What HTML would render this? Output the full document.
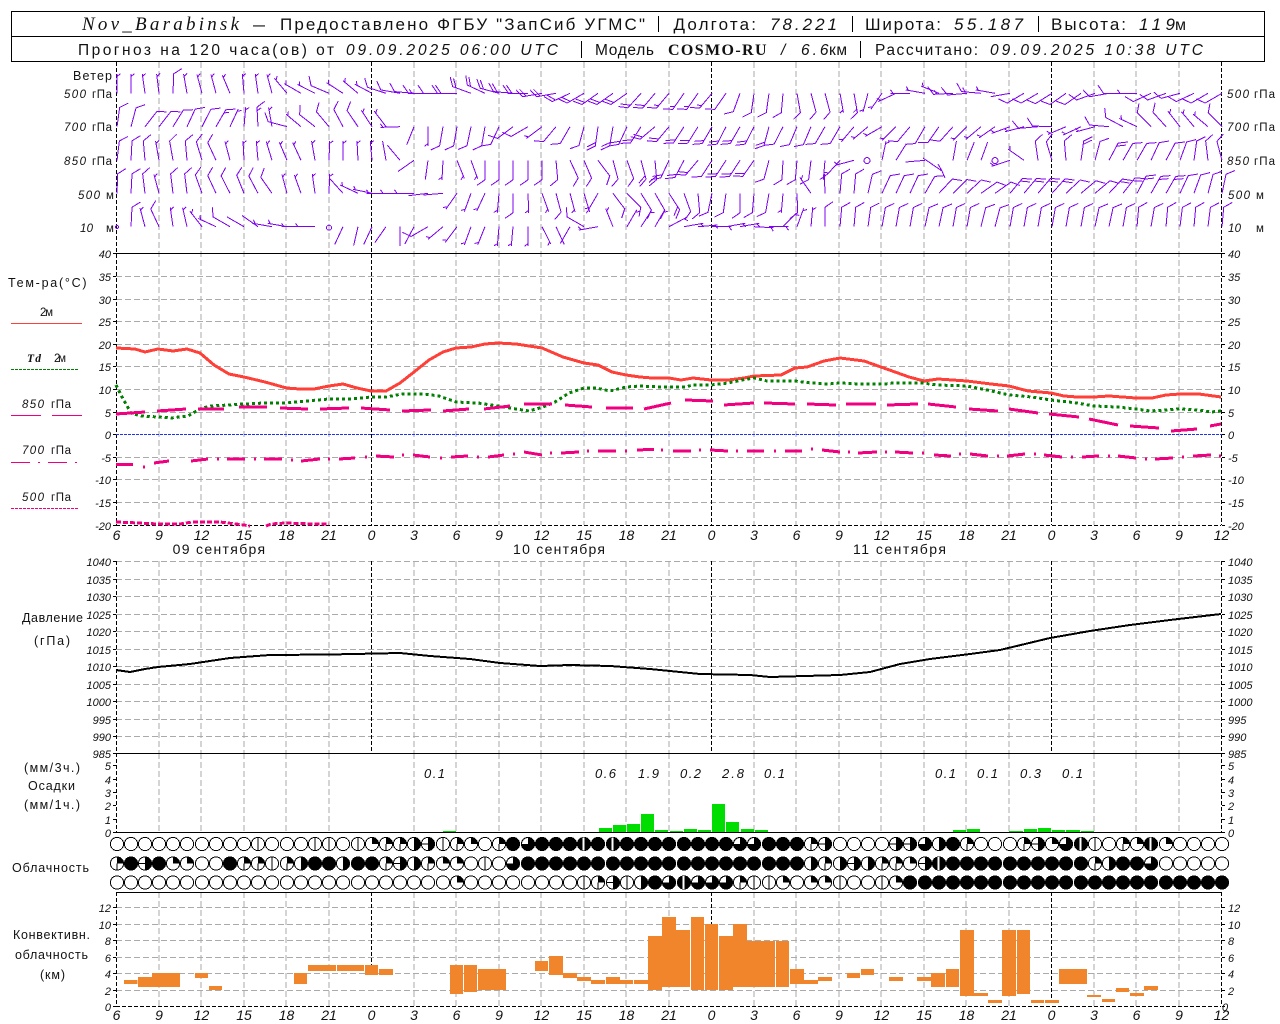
<!DOCTYPE html>
<html><head><meta charset="utf-8"><title>Nov_Barabinsk</title>
<style>
html,body{margin:0;padding:0;background:#fff;width:1280px;height:1024px;overflow:hidden}
svg{display:block}
text{font-family:"Liberation Sans",sans-serif;fill:#111}
.i{font-style:italic}
.t{font-size:17px}
.u{font-size:15.5px}
.a{font-size:11px;font-style:italic}
.h{font-size:14px;font-style:italic;text-anchor:middle}
.l{font-size:12.5px}
.p{font-size:13px;font-style:italic}
.s{font-family:"Liberation Serif",serif}
.g{fill:none;stroke:#aaa;stroke-width:1;stroke-dasharray:6 3}
.k{fill:none;stroke:#000;stroke-width:1;stroke-dasharray:4 2}
.w use,.w path,.w circle{fill:none;stroke:#8000f0;stroke-width:1}
</style></head><body>
<svg width="1280" height="1024" viewBox="0 0 1280 1024" xmlns="http://www.w3.org/2000/svg">
<defs>
<path id="s" d="M0 0V-19.5M0-17L3.5-19.5"/>
<path id="l" d="M0 0V-19.5L8-25"/>
<path id="m" d="M0 0V-19.5L8-25M0-16L4-18.7"/>
<path id="d" d="M0 0V-19.5L8-25M0-16L8-21.5"/>
<path id="n" d="M0 0V-19.5"/>
<g id="c0"><circle r="6.6" fill="#fff" stroke="#000"/></g>
<g id="c1"><circle r="6.6" fill="#fff" stroke="#000"/><path d="M0-6.6V6.6" stroke="#000"/></g>
<g id="c2"><circle r="6.6" fill="#fff" stroke="#000"/><path d="M0 0V-6.6A6.6 6.6 0 0 1 6.6 0Z" fill="#000"/></g>
<g id="c3"><circle r="6.6" fill="#fff" stroke="#000"/><path d="M0 0V-6.6A6.6 6.6 0 0 1 6.6 0Z" fill="#000"/><path d="M0 0V6.6" stroke="#000"/></g>
<g id="c4"><circle r="6.6" fill="#fff" stroke="#000"/><path d="M0-6.6A6.6 6.6 0 0 1 0 6.6Z" fill="#000"/></g>
<g id="c5"><circle r="6.6" fill="#fff" stroke="#000"/><path d="M0-6.6A6.6 6.6 0 0 1 0 6.6Z" fill="#000"/><path d="M-6.6 0H0" stroke="#000"/></g>
<g id="c6"><circle r="6.6" fill="#000" stroke="#000"/><path d="M0 0V-6A6 6 0 0 0-6 0Z" fill="#fff"/></g>
<g id="c7"><circle r="6.6" fill="#000" stroke="#000"/><rect x="-1.5" y="-6.5" width="2" height="13" fill="#fff"/></g>
<g id="c8"><circle r="6.6" fill="#000" stroke="#000"/></g>
</defs>

<g shape-rendering="crispEdges">
<rect x="11.5" y="11.5" width="1253" height="50" fill="none" stroke="#000"/>
<path d="M11 36.5H1265" stroke="#000"/>
<path d="M658.5 16V32M852.5 16V32M1038.5 16V32M581.5 41V58M860.5 41V58" stroke="#000"/>

<path class="g" d="M159 62V525M201 62V525M244 62V525M286 62V525M329 62V525M414 62V525M456 62V525M499 62V525M541 62V525M584 62V525M626 62V525M669 62V525M754 62V525M796 62V525M839 62V525M881 62V525M924 62V525M966 62V525M1009 62V525M1094 62V525M1136 62V525M1179 62V525"/>
<path class="g" d="M159 561V753M201 561V753M244 561V753M286 561V753M329 561V753M414 561V753M456 561V753M499 561V753M541 561V753M584 561V753M626 561V753M669 561V753M754 561V753M796 561V753M839 561V753M881 561V753M924 561V753M966 561V753M1009 561V753M1094 561V753M1136 561V753M1179 561V753"/>
<path class="g" d="M159 753V832M201 753V832M244 753V832M286 753V832M329 753V832M414 753V832M456 753V832M499 753V832M541 753V832M584 753V832M626 753V832M669 753V832M754 753V832M796 753V832M839 753V832M881 753V832M924 753V832M966 753V832M1009 753V832M1094 753V832M1136 753V832M1179 753V832"/>
<path class="g" d="M159 892V1006M201 892V1006M244 892V1006M286 892V1006M329 892V1006M414 892V1006M456 892V1006M499 892V1006M541 892V1006M584 892V1006M626 892V1006M669 892V1006M754 892V1006M796 892V1006M839 892V1006M881 892V1006M924 892V1006M966 892V1006M1009 892V1006M1094 892V1006M1136 892V1006M1179 892V1006"/>
<path class="g" d="M116 276.5H1221M116 299.5H1221M116 321.5H1221M116 344.5H1221M116 366.5H1221M116 389.5H1221M116 412.5H1221M116 457.5H1221M116 479.5H1221M116 502.5H1221"/>
<path class="g" d="M116 561.5H1221M116 579.5H1221M116 596.5H1221M116 614.5H1221M116 631.5H1221M116 649.5H1221M116 666.5H1221M116 684.5H1221M116 701.5H1221M116 719.5H1221M116 736.5H1221"/>
<path class="g" d="M116 907.5H1221M116 924.5H1221M116 940.5H1221M116 957.5H1221M116 973.5H1221M116 990.5H1221"/>
<path class="k" d="M371.5 62V525M711.5 62V525M1051.5 62V525M371.5 561V753M711.5 561V753M1051.5 561V753M371.5 892V965M711.5 892V925M1051.5 892V998"/>
<path class="k" d="M116.5 62V525M116.5 561V832M116.5 892V1006M1221.5 62V525M1221.5 561V832M1221.5 892V1006M116 525.5H1221M116 1006.5H1221"/>
<path d="M116 253.5H1222M116 753.5H1222M116 832.5H1222M116 892.5H1222" stroke="#000" fill="none"/>
<path d="M113 253.5h3M113 276.5h3M113 299.5h3M113 321.5h3M113 344.5h3M113 366.5h3M113 389.5h3M113 412.5h3M113 434.5h3M113 457.5h3M113 479.5h3M113 502.5h3M113 525.5h3M113 561.5h3M113 579.5h3M113 596.5h3M113 614.5h3M113 631.5h3M113 649.5h3M113 666.5h3M113 684.5h3M113 701.5h3M113 719.5h3M113 736.5h3M113 753.5h3M113 765.5h3M113 779.5h3M113 792.5h3M113 805.5h3M113 819.5h3M113 832.5h3M113 907.5h3M113 924.5h3M113 940.5h3M113 957.5h3M113 973.5h3M113 990.5h3M113 1006.5h3M1222 253.5h3M1222 276.5h3M1222 299.5h3M1222 321.5h3M1222 344.5h3M1222 366.5h3M1222 389.5h3M1222 412.5h3M1222 434.5h3M1222 457.5h3M1222 479.5h3M1222 502.5h3M1222 525.5h3M1222 561.5h3M1222 579.5h3M1222 596.5h3M1222 614.5h3M1222 631.5h3M1222 649.5h3M1222 666.5h3M1222 684.5h3M1222 701.5h3M1222 719.5h3M1222 736.5h3M1222 753.5h3M1222 765.5h3M1222 779.5h3M1222 792.5h3M1222 805.5h3M1222 819.5h3M1222 832.5h3M1222 907.5h3M1222 924.5h3M1222 940.5h3M1222 957.5h3M1222 973.5h3M1222 990.5h3M1222 1006.5h3" stroke="#000" fill="none"/>
<path d="M116 434.5H1222" stroke="#2030ff" stroke-dasharray="3 1" fill="none"/>

<g class="w">
<g transform="translate(0 93.3)">
<use href="#s" transform="translate(117)rotate(0)"/><use href="#s" transform="translate(131)rotate(0)"/><use href="#s" transform="translate(145)rotate(-8)"/><use href="#s" transform="translate(159)rotate(-7)"/><use href="#l" transform="translate(173)rotate(2)"/><use href="#s" transform="translate(187)rotate(-10)"/><use href="#s" transform="translate(202)rotate(-15)"/><use href="#s" transform="translate(216)rotate(-15)"/><use href="#s" transform="translate(230)rotate(-23)"/><use href="#s" transform="translate(244)rotate(-5)"/><use href="#s" transform="translate(258)rotate(-8)"/><use href="#s" transform="translate(272)rotate(-15)"/><use href="#s" transform="translate(287)rotate(-40)"/><use href="#s" transform="translate(301)rotate(-60)"/><use href="#s" transform="translate(315)rotate(-63)"/><use href="#l" transform="translate(329)rotate(-67)"/><use href="#s" transform="translate(343)rotate(-57)"/><use href="#s" transform="translate(358)rotate(-50)"/><use href="#s" transform="translate(372)rotate(-62)"/><use href="#l" transform="translate(386)rotate(-72)"/><use href="#l" transform="translate(400)rotate(-80)"/><use href="#l" transform="translate(414)rotate(-85)"/><use href="#m" transform="translate(428)rotate(-90)"/><use href="#l" transform="translate(443)rotate(-90)"/><use href="#d" transform="translate(457)rotate(-90)"/><use href="#d" transform="translate(471)rotate(-70)"/><use href="#d" transform="translate(485)rotate(-65)"/><use href="#d" transform="translate(499)rotate(-75)"/><use href="#d" transform="translate(513)rotate(-85)"/><use href="#d" transform="translate(528)rotate(-90)"/><use href="#d" transform="translate(542)rotate(-100)"/><use href="#d" transform="translate(556)rotate(-100)"/><use href="#d" transform="translate(570)rotate(-115)"/><use href="#d" transform="translate(584)rotate(-120)"/><use href="#d" transform="translate(598)rotate(-125)"/><use href="#d" transform="translate(613)rotate(-125)"/><use href="#d" transform="translate(627)rotate(-125)"/><use href="#d" transform="translate(641)rotate(-138)"/><use href="#d" transform="translate(655)rotate(-140)"/><use href="#m" transform="translate(669)rotate(-140)"/><use href="#m" transform="translate(684)rotate(-145)"/><use href="#m" transform="translate(698)rotate(-145)"/><use href="#m" transform="translate(712)rotate(-140)"/><use href="#l" transform="translate(726)rotate(-145)"/><use href="#l" transform="translate(740)rotate(-160)"/><use href="#l" transform="translate(754)rotate(-172)"/><use href="#l" transform="translate(769)rotate(-172)"/><use href="#l" transform="translate(783)rotate(-175)"/><use href="#l" transform="translate(797)rotate(170)"/><use href="#l" transform="translate(811)rotate(165)"/><use href="#l" transform="translate(825)rotate(165)"/><use href="#s" transform="translate(840)rotate(170)"/><use href="#m" transform="translate(854)rotate(170)"/><use href="#s" transform="translate(868)rotate(-165)"/><use href="#s" transform="translate(882)rotate(-145)"/><use href="#s" transform="translate(896)rotate(-115)"/><use href="#s" transform="translate(910)rotate(-90)"/><use href="#s" transform="translate(925)rotate(-80)"/><use href="#s" transform="translate(939)rotate(-68)"/><use href="#m" transform="translate(953)rotate(-93)"/><use href="#l" transform="translate(967)rotate(-95)"/><use href="#m" transform="translate(981)rotate(-85)"/><use href="#s" transform="translate(995)rotate(-80)"/><use href="#n" transform="translate(1010)rotate(-100)"/><use href="#l" transform="translate(1024)rotate(-120)"/><use href="#l" transform="translate(1038)rotate(-120)"/><use href="#l" transform="translate(1052)rotate(-122)"/><use href="#l" transform="translate(1066)rotate(-125)"/><use href="#l" transform="translate(1081)rotate(-125)"/><use href="#l" transform="translate(1095)rotate(-110)"/><use href="#l" transform="translate(1109)rotate(-100)"/><use href="#l" transform="translate(1123)rotate(-90)"/><use href="#s" transform="translate(1137)rotate(-90)"/><use href="#l" transform="translate(1151)rotate(-115)"/><use href="#l" transform="translate(1166)rotate(-110)"/><use href="#l" transform="translate(1180)rotate(-105)"/><use href="#l" transform="translate(1194)rotate(-115)"/><use href="#l" transform="translate(1208)rotate(-120)"/><use href="#l" transform="translate(1222)rotate(-120)"/>
</g>
<g transform="translate(0 126.7)">
<use href="#l" transform="translate(117)rotate(8)"/><use href="#l" transform="translate(131)rotate(15)"/><use href="#l" transform="translate(145)rotate(38)"/><use href="#l" transform="translate(159)rotate(38)"/><use href="#l" transform="translate(173)rotate(32)"/><use href="#l" transform="translate(187)rotate(25)"/><use href="#l" transform="translate(202)rotate(27)"/><use href="#m" transform="translate(216)rotate(30)"/><use href="#s" transform="translate(230)rotate(25)"/><use href="#s" transform="translate(244)rotate(5)"/><use href="#m" transform="translate(258)rotate(-3)"/><use href="#s" transform="translate(272)rotate(-10)"/><use href="#l" transform="translate(287)rotate(-75)"/><use href="#s" transform="translate(301)rotate(-50)"/><use href="#l" transform="translate(315)rotate(-52)"/><use href="#l" transform="translate(329)rotate(-40)"/><use href="#l" transform="translate(343)rotate(-28)"/><use href="#l" transform="translate(358)rotate(-34)"/><use href="#s" transform="translate(372)rotate(-33)"/><use href="#s" transform="translate(386)rotate(-37)"/><use href="#s" transform="translate(400)rotate(-92)"/><use href="#n" transform="translate(414)rotate(-158)"/><use href="#s" transform="translate(428)rotate(180)"/><use href="#l" transform="translate(443)rotate(-170)"/><use href="#l" transform="translate(457)rotate(-170)"/><use href="#l" transform="translate(471)rotate(-168)"/><use href="#l" transform="translate(485)rotate(-170)"/><use href="#l" transform="translate(499)rotate(-155)"/><use href="#l" transform="translate(513)rotate(-127)"/><use href="#l" transform="translate(528)rotate(-120)"/><use href="#s" transform="translate(542)rotate(-127)"/><use href="#l" transform="translate(556)rotate(-140)"/><use href="#l" transform="translate(570)rotate(-150)"/><use href="#l" transform="translate(584)rotate(-165)"/><use href="#d" transform="translate(598)rotate(-172)"/><use href="#d" transform="translate(613)rotate(-170)"/><use href="#d" transform="translate(627)rotate(-155)"/><use href="#d" transform="translate(641)rotate(-147)"/><use href="#d" transform="translate(655)rotate(-130)"/><use href="#d" transform="translate(669)rotate(-140)"/><use href="#d" transform="translate(684)rotate(-147)"/><use href="#d" transform="translate(698)rotate(-148)"/><use href="#d" transform="translate(712)rotate(-150)"/><use href="#d" transform="translate(726)rotate(-153)"/><use href="#d" transform="translate(740)rotate(-150)"/><use href="#d" transform="translate(754)rotate(-153)"/><use href="#d" transform="translate(769)rotate(-165)"/><use href="#l" transform="translate(783)rotate(-153)"/><use href="#l" transform="translate(797)rotate(-157)"/><use href="#l" transform="translate(811)rotate(-157)"/><use href="#l" transform="translate(825)rotate(-150)"/><use href="#l" transform="translate(840)rotate(-150)"/><use href="#s" transform="translate(854)rotate(-140)"/><use href="#s" transform="translate(868)rotate(-130)"/><use href="#s" transform="translate(882)rotate(-120)"/><use href="#s" transform="translate(896)rotate(-135)"/><use href="#l" transform="translate(910)rotate(-140)"/><use href="#l" transform="translate(925)rotate(-150)"/><use href="#l" transform="translate(939)rotate(-145)"/><use href="#l" transform="translate(953)rotate(-138)"/><use href="#s" transform="translate(967)rotate(-135)"/><use href="#s" transform="translate(981)rotate(-130)"/><use href="#s" transform="translate(995)rotate(-125)"/><use href="#s" transform="translate(1010)rotate(-110)"/><use href="#s" transform="translate(1024)rotate(-105)"/><use href="#l" transform="translate(1038)rotate(-95)"/><use href="#l" transform="translate(1052)rotate(-88)"/><use href="#s" transform="translate(1066)rotate(-113)"/><use href="#s" transform="translate(1081)rotate(-115)"/><use href="#s" transform="translate(1095)rotate(-105)"/><use href="#l" transform="translate(1109)rotate(-85)"/><use href="#l" transform="translate(1123)rotate(-62)"/><use href="#s" transform="translate(1137)rotate(-65)"/><use href="#l" transform="translate(1151)rotate(-45)"/><use href="#l" transform="translate(1166)rotate(-42)"/><use href="#s" transform="translate(1180)rotate(-38)"/><use href="#s" transform="translate(1194)rotate(-40)"/><use href="#s" transform="translate(1208)rotate(-50)"/><use href="#l" transform="translate(1222)rotate(-45)"/>
</g>
<g transform="translate(0 160.3)">
<use href="#l" transform="translate(117)rotate(7)"/><use href="#l" transform="translate(131)rotate(3)"/><use href="#l" transform="translate(145)rotate(-5)"/><use href="#s" transform="translate(159)rotate(-10)"/><use href="#l" transform="translate(173)rotate(-10)"/><use href="#l" transform="translate(187)rotate(-5)"/><use href="#l" transform="translate(202)rotate(-17)"/><use href="#l" transform="translate(216)rotate(-25)"/><use href="#s" transform="translate(230)rotate(-15)"/><use href="#s" transform="translate(244)rotate(-3)"/><use href="#s" transform="translate(258)rotate(-5)"/><use href="#s" transform="translate(272)rotate(-17)"/><use href="#s" transform="translate(287)rotate(-23)"/><use href="#s" transform="translate(301)rotate(-25)"/><use href="#s" transform="translate(315)rotate(-10)"/><use href="#s" transform="translate(329)rotate(2)"/><use href="#s" transform="translate(343)rotate(0)"/><use href="#s" transform="translate(358)rotate(-3)"/><use href="#s" transform="translate(372)rotate(-5)"/><use href="#n" transform="translate(386)rotate(-10)"/><use href="#n" transform="translate(400)rotate(-40)"/><use href="#n" transform="translate(414)rotate(-125)"/><use href="#n" transform="translate(428)rotate(-172)"/><use href="#s" transform="translate(443)rotate(-177)"/><use href="#s" transform="translate(457)rotate(158)"/><use href="#s" transform="translate(471)rotate(160)"/><use href="#l" transform="translate(485)rotate(180)"/><use href="#l" transform="translate(499)rotate(180)"/><use href="#l" transform="translate(513)rotate(180)"/><use href="#l" transform="translate(528)rotate(180)"/><use href="#l" transform="translate(542)rotate(180)"/><use href="#l" transform="translate(556)rotate(175)"/><use href="#l" transform="translate(570)rotate(155)"/><use href="#l" transform="translate(584)rotate(157)"/><use href="#l" transform="translate(598)rotate(143)"/><use href="#l" transform="translate(613)rotate(165)"/><use href="#l" transform="translate(627)rotate(160)"/><use href="#d" transform="translate(641)rotate(165)"/><use href="#d" transform="translate(655)rotate(175)"/><use href="#d" transform="translate(669)rotate(-155)"/><use href="#d" transform="translate(684)rotate(-152)"/><use href="#d" transform="translate(698)rotate(-140)"/><use href="#l" transform="translate(712)rotate(-147)"/><use href="#d" transform="translate(726)rotate(-147)"/><use href="#d" transform="translate(740)rotate(-147)"/><use href="#d" transform="translate(754)rotate(-145)"/><use href="#l" transform="translate(769)rotate(-165)"/><use href="#l" transform="translate(783)rotate(-177)"/><use href="#l" transform="translate(797)rotate(-175)"/><use href="#l" transform="translate(811)rotate(-173)"/><use href="#s" transform="translate(825)rotate(-175)"/><use href="#s" transform="translate(840)rotate(-138)"/><use href="#s" transform="translate(854)rotate(-105)"/><circle cx="867" cy="0.3" r="3"/><use href="#s" transform="translate(882)rotate(12)"/><use href="#n" transform="translate(896)rotate(32)"/><use href="#n" transform="translate(925)rotate(-95)"/><use href="#n" transform="translate(953)rotate(10)"/><use href="#n" transform="translate(967)rotate(22)"/><use href="#n" transform="translate(981)rotate(20)"/><circle cx="995" cy="0.3" r="3"/><use href="#s" transform="translate(1010)rotate(-108)"/><use href="#s" transform="translate(1024)rotate(-55)"/><use href="#l" transform="translate(1038)rotate(-8)"/><use href="#l" transform="translate(1052)rotate(-17)"/><use href="#l" transform="translate(1066)rotate(-5)"/><use href="#d" transform="translate(1081)rotate(8)"/><use href="#l" transform="translate(1095)rotate(15)"/><use href="#d" transform="translate(1109)rotate(28)"/><use href="#l" transform="translate(1123)rotate(30)"/><use href="#l" transform="translate(1137)rotate(30)"/><use href="#l" transform="translate(1151)rotate(25)"/><use href="#l" transform="translate(1166)rotate(28)"/><use href="#l" transform="translate(1180)rotate(20)"/><use href="#l" transform="translate(1194)rotate(8)"/><use href="#l" transform="translate(1208)rotate(-7)"/><use href="#l" transform="translate(1222)rotate(-15)"/>
</g>
<path d="M923 158L942 171L945 178M938 164L942 171"/>
<g transform="translate(0 193.3)">
<use href="#l" transform="translate(117)rotate(2)"/><use href="#l" transform="translate(131)rotate(3)"/><use href="#l" transform="translate(145)rotate(-7)"/><use href="#s" transform="translate(159)rotate(-15)"/><use href="#l" transform="translate(173)rotate(-7)"/><use href="#l" transform="translate(187)rotate(-7)"/><use href="#l" transform="translate(202)rotate(-20)"/><use href="#l" transform="translate(216)rotate(-25)"/><use href="#l" transform="translate(230)rotate(-27)"/><use href="#l" transform="translate(244)rotate(-22)"/><use href="#l" transform="translate(258)rotate(-28)"/><use href="#l" transform="translate(272)rotate(-35)"/><use href="#s" transform="translate(287)rotate(-15)"/><use href="#s" transform="translate(301)rotate(-20)"/><use href="#s" transform="translate(315)rotate(-8)"/><use href="#s" transform="translate(329)rotate(2)"/><use href="#n" transform="translate(343)rotate(-42)"/><use href="#s" transform="translate(358)rotate(-65)"/><use href="#s" transform="translate(372)rotate(-78)"/><use href="#s" transform="translate(386)rotate(-90)"/><use href="#s" transform="translate(400)rotate(-90)"/><use href="#s" transform="translate(414)rotate(-90)"/><use href="#n" transform="translate(428)rotate(-97)"/><use href="#n" transform="translate(443)rotate(-95)"/><use href="#s" transform="translate(457)rotate(-145)"/><use href="#s" transform="translate(471)rotate(-160)"/><use href="#s" transform="translate(485)rotate(-155)"/><use href="#s" transform="translate(499)rotate(-175)"/><use href="#l" transform="translate(513)rotate(180)"/><use href="#s" transform="translate(528)rotate(178)"/><use href="#s" transform="translate(542)rotate(160)"/><use href="#l" transform="translate(556)rotate(165)"/><use href="#s" transform="translate(570)rotate(165)"/><use href="#s" transform="translate(584)rotate(163)"/><use href="#s" transform="translate(598)rotate(-150)"/><use href="#l" transform="translate(613)rotate(143)"/><use href="#l" transform="translate(627)rotate(135)"/><use href="#l" transform="translate(641)rotate(148)"/><use href="#l" transform="translate(655)rotate(150)"/><use href="#d" transform="translate(669)rotate(147)"/><use href="#l" transform="translate(684)rotate(160)"/><use href="#l" transform="translate(698)rotate(175)"/><use href="#l" transform="translate(712)rotate(-168)"/><use href="#l" transform="translate(726)rotate(-172)"/><use href="#l" transform="translate(740)rotate(180)"/><use href="#l" transform="translate(754)rotate(-175)"/><use href="#l" transform="translate(769)rotate(-170)"/><use href="#s" transform="translate(783)rotate(-175)"/><use href="#l" transform="translate(797)rotate(178)"/><use href="#s" transform="translate(811)rotate(-35)"/><use href="#s" transform="translate(825)rotate(-2)"/><use href="#l" transform="translate(840)rotate(5)"/><use href="#l" transform="translate(854)rotate(5)"/><use href="#l" transform="translate(868)rotate(13)"/><use href="#l" transform="translate(882)rotate(25)"/><use href="#l" transform="translate(896)rotate(25)"/><use href="#l" transform="translate(910)rotate(25)"/><use href="#l" transform="translate(925)rotate(30)"/><use href="#l" transform="translate(939)rotate(43)"/><use href="#l" transform="translate(953)rotate(45)"/><use href="#l" transform="translate(967)rotate(47)"/><use href="#l" transform="translate(981)rotate(55)"/><use href="#l" transform="translate(995)rotate(55)"/><use href="#d" transform="translate(1010)rotate(40)"/><use href="#d" transform="translate(1024)rotate(40)"/><use href="#d" transform="translate(1038)rotate(40)"/><use href="#d" transform="translate(1052)rotate(42)"/><use href="#l" transform="translate(1066)rotate(47)"/><use href="#l" transform="translate(1081)rotate(50)"/><use href="#l" transform="translate(1095)rotate(50)"/><use href="#d" transform="translate(1109)rotate(43)"/><use href="#d" transform="translate(1123)rotate(38)"/><use href="#d" transform="translate(1137)rotate(28)"/><use href="#d" transform="translate(1151)rotate(30)"/><use href="#d" transform="translate(1166)rotate(30)"/><use href="#l" transform="translate(1180)rotate(25)"/><use href="#l" transform="translate(1194)rotate(20)"/><use href="#l" transform="translate(1208)rotate(15)"/><use href="#l" transform="translate(1222)rotate(12)"/>
</g>
<g transform="translate(0 226.7)">
<circle cx="117" cy="0.3" r="1.5"/><use href="#l" transform="translate(131)rotate(3)"/><use href="#s" transform="translate(145)rotate(-15)"/><use href="#l" transform="translate(159)rotate(-25)"/><use href="#s" transform="translate(173)rotate(-8)"/><use href="#s" transform="translate(187)rotate(-13)"/><use href="#s" transform="translate(202)rotate(-38)"/><use href="#s" transform="translate(216)rotate(-65)"/><use href="#l" transform="translate(230)rotate(-60)"/><use href="#n" transform="translate(244)rotate(-60)"/><use href="#n" transform="translate(258)rotate(-55)"/><use href="#s" transform="translate(272)rotate(-80)"/><use href="#s" transform="translate(287)rotate(-80)"/><use href="#s" transform="translate(301)rotate(-90)"/><use href="#s" transform="translate(315)rotate(-90)"/><circle cx="329" cy="1" r="2.5"/><use href="#n" transform="translate(343)rotate(-155)"/><use href="#n" transform="translate(358)rotate(-167)"/><use href="#n" transform="translate(372)rotate(-155)"/><use href="#n" transform="translate(386)rotate(-145)"/><use href="#n" transform="translate(400)rotate(180)"/><use href="#n" transform="translate(414)rotate(-152)"/><use href="#l" transform="translate(428)rotate(-120)"/><use href="#s" transform="translate(443)rotate(-130)"/><use href="#s" transform="translate(457)rotate(-143)"/><use href="#s" transform="translate(471)rotate(-160)"/><use href="#s" transform="translate(485)rotate(-158)"/><use href="#s" transform="translate(499)rotate(-175)"/><use href="#s" transform="translate(513)rotate(-175)"/><use href="#s" transform="translate(528)rotate(180)"/><use href="#s" transform="translate(542)rotate(153)"/><use href="#n" transform="translate(556)rotate(155)"/><use href="#n" transform="translate(570)rotate(-150)"/><use href="#l" transform="translate(584)rotate(-60)"/><use href="#s" transform="translate(598)rotate(-100)"/><use href="#s" transform="translate(613)rotate(-22)"/><use href="#s" transform="translate(627)rotate(30)"/><use href="#s" transform="translate(641)rotate(33)"/><use href="#s" transform="translate(655)rotate(30)"/><use href="#s" transform="translate(669)rotate(62)"/><use href="#s" transform="translate(684)rotate(80)"/><use href="#s" transform="translate(698)rotate(85)"/><use href="#s" transform="translate(712)rotate(90)"/><use href="#s" transform="translate(726)rotate(80)"/><use href="#s" transform="translate(740)rotate(80)"/><use href="#s" transform="translate(754)rotate(93)"/><use href="#s" transform="translate(769)rotate(90)"/><use href="#s" transform="translate(783)rotate(45)"/><use href="#s" transform="translate(797)rotate(20)"/><use href="#s" transform="translate(811)rotate(5)"/><use href="#l" transform="translate(825)rotate(0)"/><use href="#l" transform="translate(840)rotate(5)"/><use href="#l" transform="translate(854)rotate(5)"/><use href="#l" transform="translate(868)rotate(8)"/><use href="#l" transform="translate(882)rotate(10)"/><use href="#l" transform="translate(896)rotate(10)"/><use href="#l" transform="translate(910)rotate(10)"/><use href="#l" transform="translate(925)rotate(12)"/><use href="#l" transform="translate(939)rotate(12)"/><use href="#l" transform="translate(953)rotate(10)"/><use href="#l" transform="translate(967)rotate(10)"/><use href="#l" transform="translate(981)rotate(14)"/><use href="#l" transform="translate(995)rotate(15)"/><use href="#l" transform="translate(1010)rotate(10)"/><use href="#l" transform="translate(1024)rotate(10)"/><use href="#l" transform="translate(1038)rotate(10)"/><use href="#l" transform="translate(1052)rotate(10)"/><use href="#l" transform="translate(1066)rotate(10)"/><use href="#l" transform="translate(1081)rotate(10)"/><use href="#l" transform="translate(1095)rotate(12)"/><use href="#l" transform="translate(1109)rotate(12)"/><use href="#l" transform="translate(1123)rotate(10)"/><use href="#l" transform="translate(1137)rotate(5)"/><use href="#l" transform="translate(1151)rotate(10)"/><use href="#l" transform="translate(1166)rotate(5)"/><use href="#l" transform="translate(1180)rotate(7)"/><use href="#l" transform="translate(1194)rotate(5)"/><use href="#l" transform="translate(1208)rotate(7)"/><use href="#l" transform="translate(1222)rotate(5)"/>
</g>
</g>

<g fill="none" stroke-linejoin="round">
<path stroke="#ff4038" stroke-width="3" d="M116 348L135 349L145 352L158 349L173 351L187 349L200 353L214 365L229 374L244 377L265 382L286.5 388L300 389L314 389L329 386L343 384L357 388L371 391L386 391L400 383L414 372L429 360L443 352L456 348L471 347L485 344L498 343L516 344L542 348L563 357L584 363L598 365L612 372L626 375L640 377L652 378L669 378L681 380L693 378L711 380L728 380L744 378L754 376L781 375L795 368L807 367L824 361L840 358L864 361L881 367L909 377L924 381L938 379L967 381L991 384L1009 386L1028 391L1051 393L1064 396L1077 397L1094 397L1109 396L1136 398L1152 398L1166 395L1180 394L1199 394L1221 397"/>
<path stroke="#008000" stroke-width="3" stroke-dasharray="3 3" d="M116 385L122 397L131 413L141 416L158 417L171 418L188 416L200 409L210 406L229 405L244 404L265 403L286 403L306 401L329 399L351 399L371 397L386 397L402 394L424 394L439 396L456 402L478 403L498 406L516 409L529 411L543 407L555 402L569 393L584 388L596 388L610 391L626 387L640 386L660 387L685 387L693 385L711 385L728 383L742 380L754 378L767 381L795 381L811 383L828 384L840 383L860 384L885 384L893 383L922 383L938 385L967 386L987 390L1009 395L1032 397L1051 400L1077 403L1094 406L1117 407L1136 409L1150 411L1180 409L1199 410L1211 412L1221 411"/>
<path stroke="#f00080" stroke-width="3" d="M116 414L145 412M157 411L186 409M198 409L224 409M239 407L267 407M280 408L308 409M320 409L349 408M361 408L390 410M402 411L431 410M443 411L469 409M484 409L510 406M524 404L552 404M565 405L592 407M606 408L633 408M644 409L671 403M685 400L713 401M724 405L754 403M764 403L795 404M807 404L836 405M846 404L876 404M887 405L918 404M928 404L956 407M969 409L998 411M1009 409L1038 413M1049 414L1079 417M1089 419L1118 425M1130 426L1159 428M1171 431L1197 429M1210 426L1221 424"/>
<path stroke="#f00080" stroke-width="3" d="M116 464.3H133M143 467h2M154 463L169 461M191 461L208 459M217 459h2M227 459H245M254 459h2M264 459H282M291 460h2M301 461L320 459M328 459h2M339 459L355 458M365 457h2M376 456L394 457M402 455h2M413 455L430 457M440 458h2M451 457L468 456M477 457h2M488 457L504 455M513 454h2M524 452L542 455M550 453h2M561 453L579 452M587 451h2M598 451H616M625 451h2M637 450L654 449.3M661 450h2M673 451H691M699 450h2M710 450L728 451M736 451h2M747 451H764M774 451h2M785 451H802M811 449h2M822 450L840 452M848 452h2M858 453L877 452M885 452h2M895 452L913 453M922 453h2M934 455L951 456M959 454h2M970 454L988 456M997 456h2M1007 456L1025 454M1034 454h2M1044 455L1062 457M1071 457h2M1082 457L1099 456M1108 456h2M1118 456L1136 458M1145 459h2M1155 459L1173 458M1182 457h2M1193 456L1211 455M1219 456h2"/>
<path stroke="#f00080" stroke-width="3" stroke-dasharray="5 2" d="M116 522L139 523L158 524L180 524L192 522L220 522L244 525L250 526M266 526L271 524L286 523L314 524L329 524"/>
<path stroke="#000" stroke-width="2" d="M116 670L130 672L145 669L158 667L190 664L230 658L270 655L330 654.5L400 653L430 656L470 659L500 663L540 666L570 665L610 666L650 669L700 674L750 675L770 677L840 675L870 672L900 664L930 659L970 654L1000 650L1050 638L1090 631L1130 625L1170 620L1221 614"/>
</g>

<g fill="none">
<path stroke="#ff4038" d="M11 323.5H82"/>
<path stroke="#008000" stroke-dasharray="3 1" d="M11 369.5H78"/>
<path stroke="#f00080" d="M11 415.5H41M52 415.5H82M11 462.5H30M38 462.5h2M48 462.5H67M75 462.5h2"/>
<path stroke="#f00080" stroke-dasharray="3 1" d="M11 508.5H78"/>
</g>

<g fill="#00dd00">
<rect x="443" y="831" width="13" height="1"/><rect x="599" y="828" width="13" height="4"/><rect x="613" y="825" width="13" height="7"/><rect x="627" y="824" width="13" height="8"/><rect x="641" y="814" width="13" height="18"/><rect x="655" y="830" width="13" height="2"/><rect x="670" y="831" width="13" height="1"/><rect x="684" y="829" width="13" height="3"/><rect x="698" y="830" width="13" height="2"/><rect x="712" y="804" width="13" height="28"/><rect x="726" y="822" width="13" height="10"/><rect x="741" y="829" width="13" height="3"/><rect x="755" y="830" width="13" height="2"/><rect x="953" y="830" width="13" height="2"/><rect x="967" y="829" width="13" height="3"/><rect x="1009" y="831" width="14" height="1"/><rect x="1024" y="829" width="13" height="3"/><rect x="1038" y="828" width="13" height="4"/><rect x="1052" y="830" width="13" height="2"/><rect x="1066" y="830" width="14" height="2"/><rect x="1081" y="831" width="13" height="1"/>
</g>

<g fill="#f0852c">
<rect x="124" y="980" width="13.5" height="4"/><rect x="138" y="977" width="14" height="10"/><rect x="152" y="973" width="14" height="14"/><rect x="166" y="973" width="14" height="14"/><rect x="195" y="973" width="13" height="5"/><rect x="209" y="986" width="13" height="4"/><rect x="294" y="973" width="13" height="11"/><rect x="308" y="965" width="14" height="6"/><rect x="322" y="965" width="14" height="6"/><rect x="337" y="965" width="13" height="6"/><rect x="350" y="965" width="14" height="6"/><rect x="365" y="965" width="13" height="10"/><rect x="379" y="969" width="14" height="6"/><rect x="450" y="965" width="13" height="29"/><rect x="464" y="965" width="13" height="27"/><rect x="478" y="969" width="13" height="21"/><rect x="491" y="969" width="15" height="21"/><rect x="535" y="961" width="13" height="10"/><rect x="549" y="956" width="14" height="19"/><rect x="563" y="973" width="14" height="5"/><rect x="577" y="977" width="14" height="4"/><rect x="591" y="980" width="14" height="4"/><rect x="606" y="977" width="14" height="7"/><rect x="620" y="980" width="13" height="4"/><rect x="634" y="980" width="14" height="4"/><rect x="648" y="936" width="14" height="54"/><rect x="662" y="917" width="14" height="70"/><rect x="676" y="930" width="14" height="57"/><rect x="691" y="917" width="13" height="73"/><rect x="705" y="924" width="13" height="66"/><rect x="719" y="936" width="14" height="54"/><rect x="733" y="924" width="14" height="63"/><rect x="747" y="941" width="14" height="46"/><rect x="761" y="941" width="14" height="46"/><rect x="776" y="941" width="13" height="46"/><rect x="790" y="969" width="14" height="15"/><rect x="804" y="980" width="14" height="4"/><rect x="818" y="977" width="14" height="4"/><rect x="847" y="973" width="13" height="5"/><rect x="861" y="969" width="13" height="6"/><rect x="889" y="977" width="14" height="4"/><rect x="917" y="977" width="14" height="4"/><rect x="931" y="973" width="14" height="14"/><rect x="946" y="969" width="13" height="18"/><rect x="960" y="930" width="14" height="66"/><rect x="974" y="993" width="14" height="3"/><rect x="988" y="1000" width="14" height="3"/><rect x="1002" y="930" width="14" height="66"/><rect x="1017" y="930" width="13" height="64"/><rect x="1031" y="1000" width="13" height="3"/><rect x="1045" y="1000" width="14" height="3"/><rect x="1059" y="969" width="28" height="15"/><rect x="1087" y="995" width="14" height="2"/><rect x="1102" y="999" width="13" height="3"/><rect x="1116" y="988" width="13" height="4"/><rect x="1130" y="993" width="14" height="3"/><rect x="1144" y="986" width="14" height="4"/>
</g>

<g transform="translate(0 844)">
<use href="#c0" x="117"/><use href="#c0" x="131"/><use href="#c0" x="145"/><use href="#c0" x="159"/><use href="#c0" x="173"/><use href="#c0" x="187"/><use href="#c0" x="202"/><use href="#c0" x="216"/><use href="#c0" x="230"/><use href="#c0" x="244"/><use href="#c1" x="258"/><use href="#c0" x="272"/><use href="#c0" x="287"/><use href="#c0" x="301"/><use href="#c1" x="315"/><use href="#c1" x="329"/><use href="#c0" x="343"/><use href="#c1" x="358"/><use href="#c2" x="372"/><use href="#c3" x="386"/><use href="#c3" x="400"/><use href="#c4" x="414"/><use href="#c5" x="428"/><use href="#c1" x="443"/><use href="#c3" x="457"/><use href="#c2" x="471"/><use href="#c0" x="485"/><use href="#c3" x="499"/><use href="#c8" x="513"/><use href="#c6" x="528"/><use href="#c8" x="542"/><use href="#c8" x="556"/><use href="#c8" x="570"/><use href="#c7" x="584"/><use href="#c8" x="598"/><use href="#c7" x="613"/><use href="#c8" x="627"/><use href="#c8" x="641"/><use href="#c8" x="655"/><use href="#c8" x="669"/><use href="#c8" x="684"/><use href="#c8" x="698"/><use href="#c8" x="712"/><use href="#c8" x="726"/><use href="#c6" x="740"/><use href="#c6" x="754"/><use href="#c8" x="769"/><use href="#c8" x="783"/><use href="#c8" x="797"/><use href="#c3" x="811"/><use href="#c5" x="825"/><use href="#c0" x="840"/><use href="#c0" x="854"/><use href="#c0" x="868"/><use href="#c0" x="882"/><use href="#c5" x="896"/><use href="#c5" x="910"/><use href="#c6" x="925"/><use href="#c4" x="939"/><use href="#c8" x="953"/><use href="#c3" x="967"/><use href="#c0" x="981"/><use href="#c0" x="995"/><use href="#c0" x="1010"/><use href="#c3" x="1024"/><use href="#c5" x="1038"/><use href="#c2" x="1052"/><use href="#c6" x="1066"/><use href="#c7" x="1081"/><use href="#c1" x="1095"/><use href="#c0" x="1109"/><use href="#c3" x="1123"/><use href="#c2" x="1137"/><use href="#c7" x="1151"/><use href="#c2" x="1166"/><use href="#c0" x="1180"/><use href="#c0" x="1194"/><use href="#c0" x="1208"/><use href="#c0" x="1222"/>
</g>
<g transform="translate(0 863.5)">
<use href="#c3" x="117"/><use href="#c8" x="131"/><use href="#c5" x="145"/><use href="#c8" x="159"/><use href="#c2" x="173"/><use href="#c2" x="187"/><use href="#c0" x="202"/><use href="#c0" x="216"/><use href="#c8" x="230"/><use href="#c3" x="244"/><use href="#c3" x="258"/><use href="#c1" x="272"/><use href="#c3" x="287"/><use href="#c4" x="301"/><use href="#c8" x="315"/><use href="#c8" x="329"/><use href="#c4" x="343"/><use href="#c8" x="358"/><use href="#c8" x="372"/><use href="#c3" x="386"/><use href="#c5" x="400"/><use href="#c4" x="414"/><use href="#c3" x="428"/><use href="#c2" x="443"/><use href="#c2" x="457"/><use href="#c0" x="471"/><use href="#c1" x="485"/><use href="#c0" x="499"/><use href="#c6" x="513"/><use href="#c8" x="528"/><use href="#c8" x="542"/><use href="#c8" x="556"/><use href="#c8" x="570"/><use href="#c8" x="584"/><use href="#c8" x="598"/><use href="#c8" x="613"/><use href="#c8" x="627"/><use href="#c8" x="641"/><use href="#c8" x="655"/><use href="#c8" x="669"/><use href="#c8" x="684"/><use href="#c8" x="698"/><use href="#c8" x="712"/><use href="#c8" x="726"/><use href="#c8" x="740"/><use href="#c8" x="754"/><use href="#c8" x="769"/><use href="#c8" x="783"/><use href="#c8" x="797"/><use href="#c4" x="811"/><use href="#c3" x="825"/><use href="#c4" x="840"/><use href="#c5" x="854"/><use href="#c4" x="868"/><use href="#c3" x="882"/><use href="#c3" x="896"/><use href="#c2" x="910"/><use href="#c5" x="925"/><use href="#c7" x="939"/><use href="#c8" x="953"/><use href="#c8" x="967"/><use href="#c8" x="981"/><use href="#c8" x="995"/><use href="#c8" x="1010"/><use href="#c8" x="1024"/><use href="#c8" x="1038"/><use href="#c8" x="1052"/><use href="#c8" x="1066"/><use href="#c8" x="1081"/><use href="#c3" x="1095"/><use href="#c4" x="1109"/><use href="#c8" x="1123"/><use href="#c8" x="1137"/><use href="#c6" x="1151"/><use href="#c0" x="1166"/><use href="#c0" x="1180"/><use href="#c0" x="1194"/><use href="#c0" x="1208"/><use href="#c0" x="1222"/>
</g>
<g transform="translate(0 882.5)">
<use href="#c0" x="117"/><use href="#c0" x="131"/><use href="#c0" x="145"/><use href="#c0" x="159"/><use href="#c0" x="173"/><use href="#c0" x="187"/><use href="#c0" x="202"/><use href="#c0" x="216"/><use href="#c0" x="230"/><use href="#c0" x="244"/><use href="#c0" x="258"/><use href="#c0" x="272"/><use href="#c0" x="287"/><use href="#c0" x="301"/><use href="#c0" x="315"/><use href="#c0" x="329"/><use href="#c0" x="343"/><use href="#c0" x="358"/><use href="#c0" x="372"/><use href="#c0" x="386"/><use href="#c0" x="400"/><use href="#c0" x="414"/><use href="#c0" x="428"/><use href="#c0" x="443"/><use href="#c2" x="457"/><use href="#c0" x="471"/><use href="#c0" x="485"/><use href="#c0" x="499"/><use href="#c0" x="513"/><use href="#c0" x="528"/><use href="#c0" x="542"/><use href="#c0" x="556"/><use href="#c0" x="570"/><use href="#c1" x="584"/><use href="#c3" x="598"/><use href="#c5" x="613"/><use href="#c1" x="627"/><use href="#c4" x="641"/><use href="#c8" x="655"/><use href="#c6" x="669"/><use href="#c7" x="684"/><use href="#c6" x="698"/><use href="#c6" x="712"/><use href="#c6" x="726"/><use href="#c3" x="740"/><use href="#c1" x="754"/><use href="#c1" x="769"/><use href="#c2" x="783"/><use href="#c0" x="797"/><use href="#c2" x="811"/><use href="#c2" x="825"/><use href="#c1" x="840"/><use href="#c0" x="854"/><use href="#c0" x="868"/><use href="#c1" x="882"/><use href="#c2" x="896"/><use href="#c8" x="910"/><use href="#c8" x="925"/><use href="#c8" x="939"/><use href="#c8" x="953"/><use href="#c8" x="967"/><use href="#c8" x="981"/><use href="#c8" x="995"/><use href="#c8" x="1010"/><use href="#c8" x="1024"/><use href="#c8" x="1038"/><use href="#c8" x="1052"/><use href="#c8" x="1066"/><use href="#c8" x="1081"/><use href="#c8" x="1095"/><use href="#c8" x="1109"/><use href="#c8" x="1123"/><use href="#c8" x="1137"/><use href="#c8" x="1151"/><use href="#c8" x="1166"/><use href="#c8" x="1180"/><use href="#c8" x="1194"/><use href="#c8" x="1208"/><use href="#c8" x="1222"/>
</g>
</g>

<!-- Header -->
<text class="s i" x="82" y="30" font-size="19" textLength="157" lengthAdjust="spacing">Nov_Barabinsk</text>
<text class="t" x="253" y="30" textLength="12" lengthAdjust="spacingAndGlyphs">—</text>
<text class="t" x="280" y="30" textLength="365" lengthAdjust="spacing">Предоставлено ФГБУ "ЗапСиб УГМС"</text>
<text class="t" x="673.5" y="30" textLength="82.5" lengthAdjust="spacing">Долгота:</text>
<text class="t i" x="770" y="30" textLength="67" lengthAdjust="spacing">78.221</text>
<text class="t" x="865" y="30" textLength="76" lengthAdjust="spacing">Широта:</text>
<text class="t i" x="954" y="30" textLength="69" lengthAdjust="spacing">55.187</text>
<text class="t" x="1051" y="30" textLength="75" lengthAdjust="spacing">Высота:</text>
<text class="t i" x="1139" y="30" textLength="36" lengthAdjust="spacing">119</text>
<text class="u" x="1175" y="30" textLength="11" lengthAdjust="spacingAndGlyphs">м</text>

<text class="u" x="78" y="55" textLength="256" lengthAdjust="spacing">Прогноз на 120 часа(ов) от</text>
<text class="u i" x="346" y="55" textLength="212" lengthAdjust="spacing">09.09.2025 06:00 UTC</text>
<text class="u" x="595" y="55" textLength="59" lengthAdjust="spacing">Модель</text>
<text class="s" x="668" y="55" font-size="16" font-weight="bold" textLength="98.5" lengthAdjust="spacing">COSMO-RU</text>
<text class="u i" x="781" y="55">/</text>
<text class="u i" x="801" y="55" textLength="27.5" lengthAdjust="spacing">6.6</text>
<text class="u" x="829" y="55" textLength="18" lengthAdjust="spacing">км</text>
<text class="u" x="875" y="55" textLength="103" lengthAdjust="spacing">Рассчитано:</text>
<text class="u i" x="990" y="55" textLength="213" lengthAdjust="spacing">09.09.2025 10:38 UTC</text>

<!-- Wind labels -->
<text class="l" x="73" y="80" textLength="39" lengthAdjust="spacing">Ветер</text>
<g font-size="11.5">
<text class="i" x="64" y="98" font-size="11.5" textLength="22" lengthAdjust="spacing">500</text><text x="92" y="98" font-size="11.5" textLength="20" lengthAdjust="spacing">гПа</text>
<text class="i" x="64" y="131" font-size="11.5" textLength="22" lengthAdjust="spacing">700</text><text x="92" y="131" font-size="11.5" textLength="20" lengthAdjust="spacing">гПа</text>
<text class="i" x="64" y="165" font-size="11.5" textLength="22" lengthAdjust="spacing">850</text><text x="92" y="165" font-size="11.5" textLength="20" lengthAdjust="spacing">гПа</text>
<text class="i" x="78" y="199" font-size="11.5" textLength="22" lengthAdjust="spacing">500</text><text x="106" y="199" font-size="11.5">м</text>
<text class="i" x="80" y="232" font-size="11.5" textLength="13" lengthAdjust="spacing">10</text><text x="106" y="232" font-size="11.5">м</text>
<text class="i" x="1227" y="98" font-size="11.5" textLength="22" lengthAdjust="spacing">500</text><text x="1254" y="98" font-size="11.5" textLength="21" lengthAdjust="spacing">гПа</text>
<text class="i" x="1227" y="131" font-size="11.5" textLength="22" lengthAdjust="spacing">700</text><text x="1254" y="131" font-size="11.5" textLength="21" lengthAdjust="spacing">гПа</text>
<text class="i" x="1227" y="165" font-size="11.5" textLength="22" lengthAdjust="spacing">850</text><text x="1254" y="165" font-size="11.5" textLength="21" lengthAdjust="spacing">гПа</text>
<text class="i" x="1228" y="199" font-size="11.5" textLength="22" lengthAdjust="spacing">500</text><text x="1256" y="199" font-size="11.5">м</text>
<text class="i" x="1228" y="232" font-size="11.5" textLength="13" lengthAdjust="spacing">10</text><text x="1256" y="232" font-size="11.5">м</text>
</g>

<!-- Temperature labels -->
<text class="l" x="8" y="287" textLength="78.5" lengthAdjust="spacing">Тем-ра(°C)</text>
<text x="40" y="316" font-size="11.5" textLength="13" lengthAdjust="spacing">2м</text>
<text x="27" y="362" font-size="11.5" font-weight="bold" class="s i" textLength="14" lengthAdjust="spacing">Td</text><text x="54" y="362" font-size="11.5" textLength="12" lengthAdjust="spacing">2м</text>
<text class="i" x="22" y="408" font-size="11.5" textLength="22" lengthAdjust="spacing">850</text><text x="51" y="408" font-size="11.5" textLength="20" lengthAdjust="spacing">гПа</text>
<text class="i" x="22" y="454" font-size="11.5" textLength="22" lengthAdjust="spacing">700</text><text x="51" y="454" font-size="11.5" textLength="20" lengthAdjust="spacing">гПа</text>
<text class="i" x="22" y="501" font-size="11.5" textLength="22" lengthAdjust="spacing">500</text><text x="51" y="501" font-size="11.5" textLength="20" lengthAdjust="spacing">гПа</text>

<g class="a" text-anchor="end">
<text class="a" x="111" y="258">40</text><text class="a" x="111" y="281">35</text><text class="a" x="111" y="304">30</text><text class="a" x="111" y="326">25</text><text class="a" x="111" y="349">20</text><text class="a" x="111" y="371">15</text><text class="a" x="111" y="394">10</text><text class="a" x="111" y="417">5</text><text class="a" x="111" y="439">0</text><text class="a" x="111" y="462">-5</text><text class="a" x="111" y="484">-10</text><text class="a" x="111" y="507">-15</text><text class="a" x="111" y="530">-20</text>
<text class="a" x="111" y="566">1040</text><text class="a" x="111" y="584">1035</text><text class="a" x="111" y="601">1030</text><text class="a" x="111" y="619">1025</text><text class="a" x="111" y="636">1020</text><text class="a" x="111" y="654">1015</text><text class="a" x="111" y="671">1010</text><text class="a" x="111" y="689">1005</text><text class="a" x="111" y="706">1000</text><text class="a" x="111" y="724">995</text><text class="a" x="111" y="741">990</text><text class="a" x="111" y="758">985</text>
<text class="a" x="111" y="770">5</text><text class="a" x="111" y="784">4</text><text class="a" x="111" y="797">3</text><text class="a" x="111" y="810">2</text><text class="a" x="111" y="824">1</text><text class="a" x="111" y="837">0</text>
<text class="a" x="111" y="912">12</text><text class="a" x="111" y="929">10</text><text class="a" x="111" y="945">8</text><text class="a" x="111" y="962">6</text><text class="a" x="111" y="978">4</text><text class="a" x="111" y="995">2</text><text class="a" x="111" y="1011">0</text>
</g>
<g>
<text class="a" x="1228" y="258">40</text><text class="a" x="1228" y="281">35</text><text class="a" x="1228" y="304">30</text><text class="a" x="1228" y="326">25</text><text class="a" x="1228" y="349">20</text><text class="a" x="1228" y="371">15</text><text class="a" x="1228" y="394">10</text><text class="a" x="1228" y="417">5</text><text class="a" x="1228" y="439">0</text><text class="a" x="1228" y="462">-5</text><text class="a" x="1228" y="484">-10</text><text class="a" x="1228" y="507">-15</text><text class="a" x="1228" y="530">-20</text>
<text class="a" x="1228" y="566">1040</text><text class="a" x="1228" y="584">1035</text><text class="a" x="1228" y="601">1030</text><text class="a" x="1228" y="619">1025</text><text class="a" x="1228" y="636">1020</text><text class="a" x="1228" y="654">1015</text><text class="a" x="1228" y="671">1010</text><text class="a" x="1228" y="689">1005</text><text class="a" x="1228" y="706">1000</text><text class="a" x="1228" y="724">995</text><text class="a" x="1228" y="741">990</text><text class="a" x="1228" y="758">985</text>
<text class="a" x="1228" y="770">5</text><text class="a" x="1228" y="784">4</text><text class="a" x="1228" y="797">3</text><text class="a" x="1228" y="810">2</text><text class="a" x="1228" y="824">1</text><text class="a" x="1228" y="837">0</text>
<text class="a" x="1228" y="912">12</text><text class="a" x="1228" y="929">10</text><text class="a" x="1228" y="945">8</text><text class="a" x="1228" y="962">6</text><text class="a" x="1228" y="978">4</text><text class="a" x="1228" y="995">2</text><text class="a" x="1222" y="1011">0</text>
</g>

<!-- hour labels -->
<text class="h" x="116.5" y="540">6</text><text class="h" x="159" y="540">9</text><text class="h" x="201.5" y="540">12</text><text class="h" x="244" y="540">15</text><text class="h" x="286.5" y="540">18</text><text class="h" x="329" y="540">21</text><text class="h" x="371.5" y="540">0</text><text class="h" x="414" y="540">3</text><text class="h" x="456.5" y="540">6</text><text class="h" x="499" y="540">9</text><text class="h" x="541.5" y="540">12</text><text class="h" x="584" y="540">15</text><text class="h" x="626.5" y="540">18</text><text class="h" x="669" y="540">21</text><text class="h" x="711.5" y="540">0</text><text class="h" x="754" y="540">3</text><text class="h" x="796.5" y="540">6</text><text class="h" x="839" y="540">9</text><text class="h" x="881.5" y="540">12</text><text class="h" x="924" y="540">15</text><text class="h" x="966.5" y="540">18</text><text class="h" x="1009" y="540">21</text><text class="h" x="1051.5" y="540">0</text><text class="h" x="1094" y="540">3</text><text class="h" x="1136.5" y="540">6</text><text class="h" x="1179" y="540">9</text><text class="h" x="1221.5" y="540">12</text>
<text x="172.6" y="554" font-size="14" textLength="92.5" lengthAdjust="spacing">09 сентября</text>
<text x="513" y="554" font-size="14" textLength="92" lengthAdjust="spacing">10 сентября</text>
<text x="853" y="554" font-size="14" textLength="93" lengthAdjust="spacing">11 сентября</text>

<text class="h" x="116.5" y="1020">6</text><text class="h" x="159" y="1020">9</text><text class="h" x="201.5" y="1020">12</text><text class="h" x="244" y="1020">15</text><text class="h" x="286.5" y="1020">18</text><text class="h" x="329" y="1020">21</text><text class="h" x="371.5" y="1020">0</text><text class="h" x="414" y="1020">3</text><text class="h" x="456.5" y="1020">6</text><text class="h" x="499" y="1020">9</text><text class="h" x="541.5" y="1020">12</text><text class="h" x="584" y="1020">15</text><text class="h" x="626.5" y="1020">18</text><text class="h" x="669" y="1020">21</text><text class="h" x="711.5" y="1020">0</text><text class="h" x="754" y="1020">3</text><text class="h" x="796.5" y="1020">6</text><text class="h" x="839" y="1020">9</text><text class="h" x="881.5" y="1020">12</text><text class="h" x="924" y="1020">15</text><text class="h" x="966.5" y="1020">18</text><text class="h" x="1009" y="1020">21</text><text class="h" x="1051.5" y="1020">0</text><text class="h" x="1094" y="1020">3</text><text class="h" x="1136.5" y="1020">6</text><text class="h" x="1179" y="1020">9</text><text class="h" x="1221.5" y="1020">12</text>

<text class="l" x="22" y="622" textLength="61" lengthAdjust="spacing">Давление</text>
<text class="l" x="34" y="645" textLength="36" lengthAdjust="spacing">(гПа)</text>
<text class="l" x="24" y="772" textLength="56" lengthAdjust="spacing">(мм/3ч.)</text>
<text class="l" x="28" y="790" textLength="47" lengthAdjust="spacing">Осадки</text>
<text class="l" x="24" y="809" textLength="56" lengthAdjust="spacing">(мм/1ч.)</text>
<text class="l" x="12" y="872" textLength="77" lengthAdjust="spacing">Облачность</text>
<text class="l" x="13" y="939" textLength="77" lengthAdjust="spacing">Конвективн.</text>
<text class="l" x="15" y="959" textLength="73" lengthAdjust="spacing">облачность</text>
<text class="l" x="40" y="979" textLength="25" lengthAdjust="spacing">(км)</text>

<text class="p" x="424" y="778" textLength="21" lengthAdjust="spacing">0.1</text>
<text class="p" x="595" y="778" textLength="21" lengthAdjust="spacing">0.6</text>
<text class="p" x="638" y="778" textLength="21" lengthAdjust="spacing">1.9</text>
<text class="p" x="680" y="778" textLength="21" lengthAdjust="spacing">0.2</text>
<text class="p" x="722" y="778" textLength="22" lengthAdjust="spacing">2.8</text>
<text class="p" x="764" y="778" textLength="21" lengthAdjust="spacing">0.1</text>
<text class="p" x="935" y="778" textLength="21" lengthAdjust="spacing">0.1</text>
<text class="p" x="977" y="778" textLength="21" lengthAdjust="spacing">0.1</text>
<text class="p" x="1020" y="778" textLength="21" lengthAdjust="spacing">0.3</text>
<text class="p" x="1062" y="778" textLength="21" lengthAdjust="spacing">0.1</text>
</svg>
</body></html>
